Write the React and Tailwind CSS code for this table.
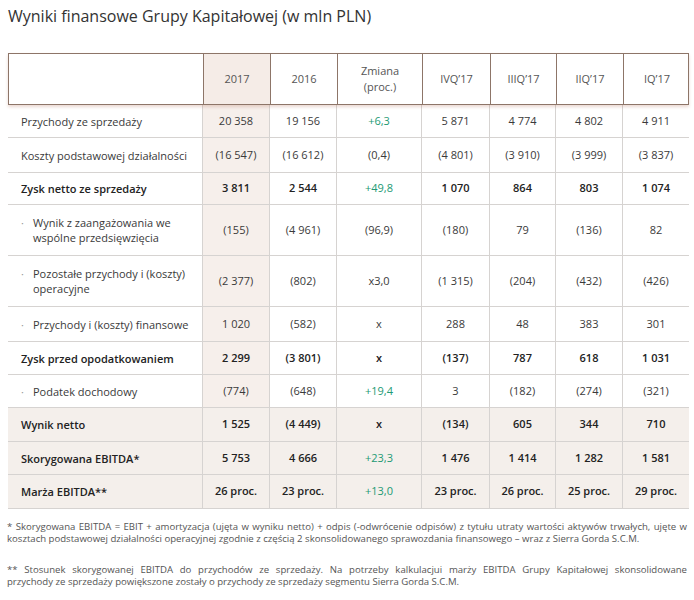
const cols = "grid grid-cols-[194px_67px_67px_85px_68px_66px_67px_67px]";

const rows = [
  { label: "Przychody ze sprzedaży", h: "h-[33px]", v: ["20 358", "19 156", "+6,3", "5 871", "4 774", "4 802", "4 911"], green: true },
  { label: "Koszty podstawowej działalności", h: "h-[35px]", v: ["(16 547)", "(16 612)", "(0,4)", "(4 801)", "(3 910)", "(3 999)", "(3 837)"] },
  { label: "Zysk netto ze sprzedaży", h: "h-[32px]", bold: true, v: ["3 811", "2 544", "+49,8", "1 070", "864", "803", "1 074"], green: true },
  { label: ["Wynik z zaangażowania we", "wspólne przedsięwzięcia"], h: "h-[51px]", sub: true, v: ["(155)", "(4 961)", "(96,9)", "(180)", "79", "(136)", "82"] },
  { label: ["Pozostałe przychody i (koszty)", "operacyjne"], h: "h-[51px]", sub: true, v: ["(2 377)", "(802)", "x3,0", "(1 315)", "(204)", "(432)", "(426)"] },
  { label: "Przychody i (koszty) finansowe", h: "h-[35px]", sub: true, v: ["1 020", "(582)", "x", "288", "48", "383", "301"] },
  { label: "Zysk przed opodatkowaniem", h: "h-[33px]", bold: true, v: ["2 299", "(3 801)", "x", "(137)", "787", "618", "1 031"] },
  { label: "Podatek dochodowy", h: "h-[33px]", sub: true, v: ["(774)", "(648)", "+19,4", "3", "(182)", "(274)", "(321)"], green: true },
  { label: "Wynik netto", h: "h-[34px]", bold: true, shade: true, v: ["1 525", "(4 449)", "x", "(134)", "605", "344", "710"] },
  { label: "Skorygowana EBITDA*", h: "h-[33px]", bold: true, shade: true, v: ["5 753", "4 666", "+23,3", "1 476", "1 414", "1 282", "1 581"], green: true },
  { label: "Marża EBITDA**", h: "h-[34px]", bold: true, shade: true, v: ["26 proc.", "23 proc.", "+13,0", "23 proc.", "26 proc.", "25 proc.", "29 proc."], green: true },
];

const heads = ["2017", "2016", ["Zmiana", "(proc.)"], "IVQ’17", "IIIQ’17", "IIQ’17", "IQ’17"];

function Row({ row }) {
  const label = Array.isArray(row.label) ? (
    <>
      {row.label[0]}
      <br />
      {row.label[1]}
    </>
  ) : (
    row.label
  );
  return (
    <div className={`${cols} ${row.h} border-b border-[#d6d3d1] ${row.shade ? "bg-[#f4efeb]" : ""}`}>
      <div className={`flex items-center pl-[13px] leading-[15px] ${row.bold ? "font-semibold text-[#222]" : ""}`}>
        {row.sub ? (
          <div className="flex">
            <span className="w-[12px] text-[#999]">·</span>
            <span>{label}</span>
          </div>
        ) : (
          label
        )}
      </div>
      {row.v.map((val, i) => {
        const isGreen = i === 2 && row.green;
        return (
          <div
            key={i}
            className={`flex items-center justify-center whitespace-nowrap border-l border-[#d6d3d1] ${
              i === 0 && !row.shade ? "bg-[#f6efeb]" : ""
            } ${isGreen ? "text-[#229a74]" : row.bold ? "font-semibold text-[#222]" : ""}`}
          >
            {val}
          </div>
        );
      })}
    </div>
  );
}

export default function App() {
  return (
    <div className="w-[694px] h-[600px] bg-white font-['Open_Sans',sans-serif] text-[#3a3a3a] overflow-hidden">
      <h1 className="pl-[8px] pt-[4px] text-[16px] leading-[24px] text-[#333]">
        Wyniki finansowe Grupy Kapitałowej (w mln PLN)
      </h1>
      <div className="ml-[8px] mt-[25px] w-[681px] text-[11px]">
        <div className={`${cols} h-[52px] border border-[#8d7568] shadow-[0_2px_3px_rgba(190,130,110,0.3)] text-[#555] relative`}>
          <div />
          {heads.map((h, i) => (
            <div
              key={i}
              className={`flex items-center justify-center text-center leading-[16px] border-l border-[#8d7568] ${
                i === 0 ? "bg-[#f5ece7]" : ""
              }`}
            >
              {Array.isArray(h) ? (
                <span>
                  {h[0]}
                  <br />
                  {h[1]}
                </span>
              ) : (
                h
              )}
            </div>
          ))}
        </div>
        {rows.map((r, i) => (
          <Row key={i} row={r} />
        ))}
      </div>
      <div className="px-[7px] mt-[12px] text-[9.6px] leading-[12px] text-[#555] text-justify">
        <p>
          * Skorygowana EBITDA = EBIT + amortyzacja (ujęta w wyniku netto) + odpis (-odwrócenie odpisów) z tytułu utraty
          wartości aktywów trwałych, ujęte w kosztach podstawowej działalności operacyjnej zgodnie z częścią 2
          skonsolidowanego sprawozdania finansowego – wraz z Sierra Gorda S.C.M.
        </p>
        <p className="mt-[19px]">
          <span className="block [text-align-last:justify]">
            ** Stosunek skorygowanej EBITDA do przychodów ze sprzedaży. Na potrzeby kalkulacjui marży EBITDA Grupy
            Kapitałowej skonsolidowane
          </span>
          <span className="block">
            przychody ze sprzedaży powiększone zostały o przychody ze sprzedaży segmentu Sierra Gorda S.C.M.
          </span>
        </p>
      </div>
    </div>
  );
}
